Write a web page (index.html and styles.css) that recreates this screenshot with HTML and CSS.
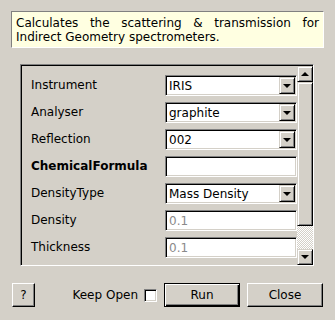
FILE: index.html
```html
<!DOCTYPE html>
<html>

<head>
    <meta charset="utf-8">
    <title>Absorption Corrections</title>
    <link rel="stylesheet" href="styles.css">
</head>

<body>
    <div class="dialog">
        <p class="desc">Calculates the scattering &amp; transmission for Indirect Geometry spectrometers.</p>

        <div class="frame">
            <div class="props">
                <label>Instrument</label>
                <div class="combo"><span>IRIS</span><i class="drop"></i></div>

                <label>Analyser</label>
                <div class="combo"><span>graphite</span><i class="drop"></i></div>

                <label>Reflection</label>
                <div class="combo"><span>002</span><i class="drop"></i></div>

                <label class="required">ChemicalFormula</label>
                <div class="field"></div>

                <label>DensityType</label>
                <div class="combo"><span>Mass Density</span><i class="drop"></i></div>

                <label>Density</label>
                <div class="field placeholder">0.1</div>

                <label>Thickness</label>
                <div class="field placeholder">0.1</div>
            </div>
            <div class="scrollbar">
                <div class="sb-btn"><i class="up"></i></div>
                <div class="sb-thumb"></div>
                <div class="sb-track"></div>
                <div class="sb-btn"><i class="down"></i></div>
            </div>
        </div>

        <div class="actions">
            <button class="btn help">?</button>
            <span class="keep">Keep Open <i class="check"></i></span>
            <button class="btn default">Run</button>
            <button class="btn">Close</button>
        </div>
    </div>
</body>

</html>
```

FILE: styles.css
```css
/* vars */
:root {
    --face: #d4d0c8;
    --shadow: #808080;
    --dark: #404040;
    --light: #ffffff;
    --tip: #ffffe1;
}

html {
    font-family: "DejaVu Sans", sans-serif;
    font-size: 12px;
}

body {
    margin: 0;
    background: var(--face);
    color: #000;
}

.dialog {
    width: 335px;
    height: 320px;
    display: flex;
    flex-direction: column;
}

.desc {
    margin: 11px 11px 0 11px;
    height: 37px;
    box-sizing: border-box;
    padding: 4px 4px 0 4px;
    background: var(--tip);
    border: 1px solid var(--shadow);
    border-right-color: var(--light);
    border-bottom-color: var(--light);
    line-height: 14px;
    text-align: justify;
}

/* scroll area */
.frame {
    margin: 16px 0 0 20px;
    width: 294px;
    height: 202px;
    box-sizing: border-box;
    border-top: 1px solid var(--shadow);
    border-left: 1px solid var(--shadow);
    border-right: 1px solid var(--light);
    border-bottom: 1px solid var(--light);
    display: flex;
}

.frame > .props,
.frame > .scrollbar {
    border-top: 1px solid #000;
}

.frame::before {
    content: "";
    width: 1px;
    background: #000;
}

.props {
    flex: 1;
    overflow: hidden;
    padding: 9px 0 0 9px;
    display: grid;
    grid-template-columns: 134px 132px;
    grid-auto-rows: 21px;
    row-gap: 6px;
    align-items: center;
    align-content: start;
}

.props label {
    line-height: 21px;
}

.props .required {
    font-weight: bold;
}

.combo,
.field {
    height: 21px;
    box-sizing: border-box;
    background: #fff;
    border: 1px solid var(--shadow);
    border-right-color: var(--light);
    border-bottom-color: var(--light);
    box-shadow: inset 1px 1px 0 #000, inset -1px -1px 0 var(--face);
    display: flex;
    align-items: center;
    padding: 0 2px 0 3px;
}

.combo span {
    flex: 1;
}

.placeholder {
    color: #8a8a8a;
}

.drop {
    width: 16px;
    height: 17px;
    margin-right: -1px;
    box-sizing: border-box;
    background: var(--face);
    border: 1px solid var(--face);
    border-right-color: #000;
    border-bottom-color: #000;
    box-shadow: inset 1px 1px 0 var(--light), inset -1px -1px 0 var(--shadow);
    position: relative;
}

.drop::after,
.sb-btn i::after {
    content: "";
    position: absolute;
    left: 50%;
    top: 50%;
    margin: -2px 0 0 -4px;
    border-left: 4px solid transparent;
    border-right: 4px solid transparent;
    border-top: 4px solid #000;
}

.sb-btn i.up::after {
    border-top: none;
    border-bottom: 4px solid #000;
}

/* scrollbar */
.scrollbar {
    width: 16px;
    display: flex;
    flex-direction: column;
}

.sb-btn,
.sb-thumb {
    box-sizing: border-box;
    background: var(--face);
    border: 1px solid var(--face);
    border-right-color: #000;
    border-bottom-color: #000;
    box-shadow: inset 1px 1px 0 var(--light), inset -1px -1px 0 var(--shadow);
}

.sb-btn {
    height: 16px;
    position: relative;
}

.sb-btn i {
    position: absolute;
    inset: 0;
}

.sb-thumb {
    height: 144px;
}

.sb-track {
    flex: 1;
    background: repeating-conic-gradient(#fff 0 25%, var(--face) 0 50%) 0 0 / 2px 2px;
}

/* bottom row */
.actions {
    margin: 17px 12px 0 12px;
    display: flex;
    align-items: center;
}

.btn {
    font: inherit;
    color: #000;
    height: 24px;
    background: var(--face);
    border: 1px solid var(--light);
    border-right-color: #000;
    border-bottom-color: #000;
    box-shadow: inset -1px -1px 0 var(--shadow);
    padding: 0;
    width: 76px;
}

.btn.help {
    width: 23px;
}

.btn.default {
    border: 1px solid #000;
    box-shadow: inset 1px 1px 0 var(--light), inset -1px -1px 0 #000, inset -2px -2px 0 var(--shadow);
    margin-right: 7px;
}

.keep {
    margin-left: auto;
    margin-right: 7px;
    display: flex;
    align-items: center;
    gap: 6px;
}

.check {
    width: 13px;
    height: 13px;
    box-sizing: border-box;
    background: #fff;
    border: 1px solid var(--shadow);
    border-right-color: var(--light);
    border-bottom-color: var(--light);
    box-shadow: inset 1px 1px 0 #000, inset -1px -1px 0 var(--face);
}
```
